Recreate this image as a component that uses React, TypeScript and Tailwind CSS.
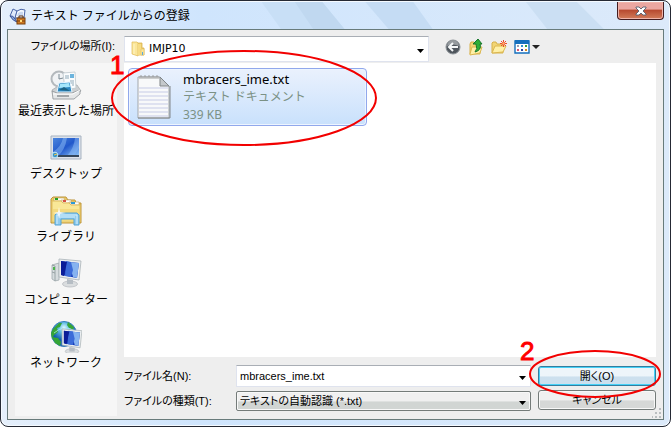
import type { ReactNode } from "react";

const jp = "font-['Noto_Sans','Noto_Sans_CJK_JP',sans-serif]";
const compact =
  "font-['Liberation_Sans','Noto_Sans_CJK_JP',sans-serif] [font-feature-settings:'palt']";

function AppIcon() {
  return (
    <svg viewBox="0 0 18 18" className="size-[18px]" aria-hidden="true">
      <path d="M1 9 4 2l4 2-2 8Z" fill="#dfe9fb" stroke="#4a65a8" />
      <path d="M8 4q4-3 8-1l-1 8H6Z" fill="#f4f8ff" stroke="#4a65a8" />
      <path d="M1 9q3-1 5 3l2 3q-4-1-7-6Z" fill="#8fabdf" stroke="#3b5398" />
      <path d="M9 6q3-2 5-1v4H8Z" fill="#c9d8f0" />
      <rect x="8" y="11" width="8" height="6" fill="#d07a22" stroke="#7b430f" />
      <path d="M10 11V9h4v2" fill="none" stroke="#5b3115" />
      <path d="M8 14h8" stroke="#7b430f" />
      <path d="M11 13h2v2h-2z" fill="#ffdc7a" />
    </svg>
  );
}

function FolderIcon() {
  return (
    <svg viewBox="0 0 16 16" className="size-4" aria-hidden="true">
      <path d="M7 2h5v5h2v7H7Z" fill="#f1cf6b" stroke="#d9b250" strokeWidth=".8" />
      <path d="M2 1h5l1 1v13l-6-2Z" fill="#fbe69a" stroke="#dfb958" strokeWidth=".7" />
      <path d="M8 3h3v11H8z" fill="#f7dc84" />
      <path d="M11 8h3v6h-3z" fill="#f9e69d" stroke="#dfb958" strokeWidth=".5" />
      <path d="M12 11h1v3h-1z" fill="#5aa9dc" />
      <path d="M4 3v10" stroke="#fff5c6" />
    </svg>
  );
}

function NotepadIcon() {
  return (
    <svg viewBox="0 0 34 46" className="h-[46px] w-[34px]" aria-hidden="true">
      <path d="M1 3h22l9 9v32H1Z" fill="#f8f9fa" stroke="#a3a7aa" />
      <path d="M1 44h32V12" fill="none" stroke="#818689" />
      <path d="M2 14h29M2 18h29M2 22h29M2 26h29M2 30h29M2 34h29M2 38h29M2 42h29" stroke="#c6cbe6" />
      <path d="M23 3v9h9Z" fill="#c4c8cb" stroke="#808588" />
      <path d="M3 5V2h2v3M7 5V2h2v3M11 5V2h2v3M15 5V2h2v3M19 5V2h2v3" fill="none" stroke="#999" strokeWidth=".9" />
    </svg>
  );
}

function RecentIcon() {
  return (
    <svg viewBox="0 0 32 32" className="size-8" aria-hidden="true">
      <path d="m2 21 8-5h17l4 6-5 3H3Z" fill="#cdd0d2" stroke="#a6abad" strokeWidth=".8" />
      <circle cx="9" cy="10" r="7.5" fill="#f1f3f5" stroke="#b4b9bd" strokeWidth="2" />
      <path d="M9 5v5l4-1" fill="none" stroke="#788892" />
      <path d="m13 4 12-1 1 16-11 2Z" fill="#fafcfd" stroke="#bcc6cc" strokeWidth=".8" />
      <path d="M15 7h4M15 9h4M20 12h4M20 14h4M22 16h2" stroke="#8fa9b9" />
      <path d="M20 5h4v4h-4z" fill="#6cb4dd" />
      <path d="m9 14 11-1 2 10H7Z" fill="#2c88c2" stroke="#e7f6ff" />
      <path d="m10 15 9-1 1 4-11 1Z" fill="#a4e6fb" />
      <path d="m9 21 5-3 6 4Z" fill="#1c6384" />
      <path d="m2 22 5 2h15l8-3v4l-6 5H3Z" fill="#e5e7e8" stroke="#8b9194" strokeWidth=".8" />
      <path d="M3 25h20l7-4" fill="none" stroke="#fff" />
      <path d="M7 26h12v2H7z" fill="#a1a6a9" />
    </svg>
  );
}

function DesktopIcon() {
  return (
    <svg viewBox="0 0 32 32" className="size-8" aria-hidden="true">
      <defs>
        <linearGradient id="desktop" x2="1" y2="1">
          <stop stopColor="#4b86dd" /><stop offset=".5" stopColor="#2158cb" /><stop offset="1" stopColor="#8ec5f7" />
        </linearGradient>
      </defs>
      <path d="M1 4h30v23H1Z" fill="#dde2ea" stroke="#a7b3c1" />
      <path d="M3 6h26v18H3Z" fill="url(#desktop)" />
      <path d="M3 20Q11 15 13 6h4Q15 18 8 24H3ZM17 24Q24 16 25 6h4v10l-5 8Z" fill="#8bbcf5" opacity=".5" />
      <path d="M3 23h26v2H3Z" fill="#34465b" />
      <circle cx="5" cy="23" r="2.8" fill="#3795c9" stroke="#c0e5f5" />
      <path d="m4 23 3-1" stroke="#f3c54b" />
    </svg>
  );
}

function LibraryIcon() {
  return (
    <svg viewBox="0 0 32 32" className="size-8" aria-hidden="true">
      <path d="M1 28V4l2-2h13l2 3h7l1 3h5v20Z" fill="#edca62" stroke="#bd953d" />
      <path d="M4 3h10l1 3H4zM11 5h10v3H11zM19 7h10v3H19z" fill="#fff" stroke="#c3a461" strokeWidth=".6" />
      <path d="M5 3h3v2H5z" fill="#28a124" /><path d="M13 5h3v2h-3z" fill="#d65042" /><path d="M21 7h4v2h-4z" fill="#2a99d7" />
      <path d="M2 6h9l2 2h6l2 2h9v17H2Z" fill="#f9e797" stroke="#dfbd60" />
      <path d="M3 14h26v12H3Z" fill="#f0d06b" opacity=".55" />
      <path d="M5 30V20l2-2h20l2 2v10h-5v-6H11v6Z" fill="#91cbed" stroke="#55a4d5" />
      <path d="M7 29v-9h20v9M9 22h16" fill="none" stroke="#d3f0ff" />
      <path d="m9 12 1 5 6 1-6 1-1 5-1-5-5-1 5-1Z" fill="white" opacity=".85" />
    </svg>
  );
}

function Monitor() {
  return (
    <>
      <ellipse cx="20" cy="26" rx="7.5" ry="3" fill="#dadddf" stroke="#b9bdc1" strokeWidth=".8" />
      <path d="m17 21 6 1v4h-6Z" fill="#b6bdc4" />
      <path d="m9 1 22 2-2 19-20-3Z" fill="#eceff0" stroke="#aab2b7" strokeWidth=".8" />
      <path d="m11 3 18 2-2 15-16-3Z" fill="#1236b4" />
      <path d="m19 4 10 1-2 15-4-1Z" fill="#86b3f0" />
      <path d="m16 3 5 1 2 8-2 7-6-1Z" fill="#3c6bd8" />
      <path d="m11 3 6 1-3 14-3-1Z" fill="#0b1c98" />
    </>
  );
}

function ComputerIcon() {
  return (
    <svg viewBox="0 0 32 32" className="size-8" aria-hidden="true">
      <path d="m2 7 7-2v17l-4 1-3-2Z" fill="#d6dcde" stroke="#a0a9ad" strokeWidth=".8" />
      <path d="m2 7 3 1v15M2 14l3 1" fill="none" stroke="#8c9799" strokeWidth=".8" />
      <path d="M3 9h2v3H3z" fill="#4cb64c" />
      <Monitor />
    </svg>
  );
}

function NetworkIcon() {
  return (
    <svg viewBox="0 0 32 32" className="size-8" aria-hidden="true">
      <defs>
        <radialGradient id="globe" cx=".5" cy=".25">
          <stop stopColor="#e3fbff" /><stop offset=".4" stopColor="#64bee3" /><stop offset="1" stopColor="#125db0" />
        </radialGradient>
      </defs>
      <circle cx="14" cy="13" r="12.5" fill="url(#globe)" stroke="#377dbe" />
      <path d="m3 8 6-6h3l-2 4-3 1 1 4-4 3-2 4-1-6Zm-1 8 6 1 3 4-1 4-5-3ZM18 1l6 5-1 3-4-2-2-3Z" fill="#35a536" />
      <path d="M4 12Q14 3 25 10" fill="none" stroke="#b8f1ff" opacity=".7" />
      <g transform="translate(4 7) scale(.9)"><Monitor /></g>
    </svg>
  );
}

function BackIcon() {
  return (
    <svg viewBox="0 0 16 16" className="size-4" aria-hidden="true">
      <circle cx="8" cy="8" r="7" fill="#4f565d" stroke="#8c9297" />
      <path d="M2 7a6 6 0 0 1 12 0Q8 4 2 7" fill="#969b9f" />
      <path d="M13 8H5m3-4L4 8l4 4" fill="none" stroke="#f4f6f7" strokeWidth="2" />
    </svg>
  );
}

function UpIcon() {
  return (
    <svg viewBox="0 0 16 18" className="h-[18px] w-4" aria-hidden="true">
      <path d="M2 16V6l1-2h3l1 2h5v10Z" fill="#f2d574" stroke="#d6b14b" />
      <path d="m2 16 2-7h10l-2 6-10 2Z" fill="#fff0a7" stroke="#dcb750" />
      <path d="M7 14q3-3 1-8H5l5-5 4 5h-2q2 6-5 8Z" fill="#2eae36" stroke="#16762a" />
    </svg>
  );
}

function NewFolderIcon() {
  return (
    <svg viewBox="0 0 16 16" className="size-4" aria-hidden="true">
      <path d="M1 14V4l1-1h3l1 2h6v9Z" fill="#f2d574" stroke="#d6b14b" />
      <path d="m1 14 3-7h11l-3 6Z" fill="#fff0a7" stroke="#dcb750" />
      <path d="M12.5 1v7M9 4.5h7m-6-2.5 5 5m0-5-5 5" stroke="#ed4b2b" />
      <circle cx="12.5" cy="4.5" r="1.3" fill="#ffb070" />
    </svg>
  );
}

function ViewIcon() {
  return (
    <svg viewBox="0 0 26 16" className="h-4 w-[26px]" aria-hidden="true">
      <path d="M1 2h14v12H1Z" fill="white" stroke="#146fbd" strokeWidth="1.4" />
      <path d="M1 1h14v4H1Z" fill="#146fbd" />
      <path d="M3 6h2v2H3z" fill="#96a0b5" /><path d="M7 6h2v2H7z" fill="#318fd1" /><path d="M11 6h2v2h-2z" fill="#31a33b" />
      <path d="M3 10h2v2H3z" fill="#df5570" /><path d="M7 10h2v2H7z" fill="#2745a4" /><path d="M11 10h2v2h-2z" fill="#d68822" />
      <path d="M18 6h8l-4 4Z" fill="#222" />
    </svg>
  );
}

function Arrow() {
  return (
    <svg viewBox="0 0 7 4" className="pointer-events-none absolute top-1/2 right-[5px] h-1 w-[7px]" aria-hidden="true">
      <path d="M0 0h7L3.5 4Z" fill="#000" />
    </svg>
  );
}

const places: { label: string; icon: ReactNode }[] = [
  { label: "最近表示した場所", icon: <RecentIcon /> },
  { label: "デスクトップ", icon: <DesktopIcon /> },
  { label: "ライブラリ", icon: <LibraryIcon /> },
  { label: "コンピューター", icon: <ComputerIcon /> },
  { label: "ネットワーク", icon: <NetworkIcon /> },
];

function TitleBar() {
  return (
    <header className="relative flex h-[27px] shrink-0 items-center pl-[2px]">
      <svg viewBox="0 0 671 28" preserveAspectRatio="xMinYMin slice" className="absolute inset-0 h-full w-full" aria-hidden="true">
        <path d="M260 0h62l23 28h-65Z" fill="#c8dff6" />
        <path d="M294 0h28l23 28h-32Z" fill="#c0d8f0" />
        <path d="M366 0h49l20 28h-45Z" fill="#c5dcf4" />
        <path d="M530 0h52l28 28h-58Z" fill="#cbdff3" />
      </svg>
      <div className="relative flex items-center gap-1">
        <AppIcon />
        <h1 className={`${jp} text-xs text-black`}>テキスト ファイルからの登録</h1>
      </div>
      <button aria-label="閉じる" className="absolute top-0 right-0 flex h-[18px] w-[47px] items-center justify-center rounded-b border border-t-0 border-[#431d20] bg-linear-to-b from-[#eba7a1] from-40% via-[#b84b31] via-50% to-[#d27c5a] shadow-[inset_0_0_0_1px_#efb4aa]">
        <svg viewBox="0 0 12 10" className="h-[10px] w-3" aria-hidden="true">
          <path d="M1 1h3l2 2 2-2h3v1L8 5l3 3v1H8L6 7 4 9H1V8l3-3-3-3Z" fill="white" stroke="#555d6e" strokeWidth=".9" />
        </svg>
      </button>
    </header>
  );
}

export default function App() {
  return (
    <main className="flex min-h-screen flex-col overflow-hidden rounded-lg border border-[#252934] bg-linear-to-r from-[#e5effb] via-[#cfe5fd] via-30% to-[#dceafa] px-[6px] pt-px pb-[6px] text-black shadow-[inset_0_0_0_1px_#f5faff]">
      <TitleBar />
      <div className="relative flex flex-1 flex-col border border-[#687b7b] bg-[#eeeeee] px-[7px]">
        <div className="flex h-[33px] shrink-0 items-center">
          <label htmlFor="folder" className={`${compact} w-[109px] shrink-0 pr-[9px] text-right text-[11px]`}>ファイルの場所(I):</label>
          <div className="relative mt-1 w-[305px] shrink-0">
            <span className="pointer-events-none absolute top-[5px] left-[6px]"><FolderIcon /></span>
            <select id="folder" className="block h-[26px] w-full appearance-none border border-[#dfe3ee] border-t-[#a9aeb5] bg-white pt-px pl-6 font-['DejaVu_Sans',sans-serif] text-[11px]">
              <option>IMJP10</option>
            </select>
            <Arrow />
          </div>
          <div className="flex items-center gap-[7px] pl-4">
            <button aria-label="戻る"><BackIcon /></button>
            <button aria-label="上のフォルダーへ"><UpIcon /></button>
            <button aria-label="新しいフォルダー"><NewFolderIcon /></button>
            <button aria-label="表示"><ViewIcon /></button>
          </div>
        </div>

        <div className="flex flex-1 gap-[7px]">
          <nav className="mb-[3px] flex w-[102px] shrink-0 flex-col bg-[#f6f6f6] pt-[6px]">
            {places.map((place) => (
              <button key={place.label} className={`${jp} flex h-[63px] flex-col items-center text-xs leading-5 whitespace-nowrap`}>
                {place.icon}
                <span>{place.label}</span>
              </button>
            ))}
          </nav>

          <div className="flex min-w-0 flex-1 flex-col">
            <section className="flex-1 bg-white px-1 pt-[5px]">
              <div className="relative w-[239px]">
                <button className="flex h-[58px] w-full items-center gap-3 rounded-sm border border-[#91a8ec] bg-linear-to-b from-[#eaf1fd] to-[#c9e1fc] pl-2 text-left shadow-[inset_0_0_0_1px_#edf5ff]">
                  <NotepadIcon />
                  <span className={`${jp} flex flex-col text-xs leading-[18px]`}>
                    <span className="text-[13px]">mbracers_ime.txt</span>
                    <span className="text-[#7b9185]">テキスト ドキュメント</span>
                    <span className="text-[#7b9185]">339 KB</span>
                  </span>
                </button>
                <svg viewBox="0 0 268 98" className="pointer-events-none absolute -top-5 -left-[17px] h-[98px] w-[268px]" aria-hidden="true">
                  <ellipse cx="133" cy="50" rx="132" ry="47" fill="none" stroke="#f20000" strokeWidth="2" />
                </svg>
                <span className="pointer-events-none absolute -top-[18px] -left-[18px] font-['Liberation_Sans',sans-serif] text-[26px] leading-[30px] text-[#ff0000] [-webkit-text-stroke:1px_#ff0000]">1</span>
              </div>
            </section>

            <div className="flex h-[62px] shrink-0 gap-[7px] pt-2">
              <div className={`${compact} grid flex-1 grid-cols-[112px_1fr] content-start gap-y-1 text-[11px]`}>
                <label htmlFor="filename" className="self-center">ファイル名(N):</label>
                <div className="relative">
                  <input id="filename" defaultValue="mbracers_ime.txt" className="block h-[22px] w-full border border-[#dfe3ee] border-t-[#a9aeb5] bg-white pl-[3px]" />
                  <Arrow />
                </div>
                <label htmlFor="filetype" className="self-center">ファイルの種類(T):</label>
                <div className="relative">
                  <select id="filetype" className="block h-5 w-full appearance-none rounded-xs border border-[#747b79] bg-linear-to-b from-[#f0f0f0] from-50% to-[#d1d5d3] to-55% pl-[3px] shadow-[inset_0_0_0_1px_#f8f8f8]">
                    <option>テキストの自動認識 (*.txt)</option>
                  </select>
                  <Arrow />
                </div>
              </div>
              <div className={`${compact} flex w-[118px] shrink-0 flex-col gap-1 pt-px text-[11px]`}>
                <div className="relative">
                  <button className="block h-5 w-full rounded-[3px] border border-[#347d9e] bg-linear-to-b from-[#edf5fa] from-50% to-[#cce0ee] to-55% leading-[18px] shadow-[inset_0_0_0_1px_#45d1f7]">開く(O)</button>
                  <svg viewBox="0 0 134 50" className="pointer-events-none absolute -top-[17px] -left-[10px] h-[50px] w-[134px] max-w-none" aria-hidden="true">
                    <ellipse cx="67" cy="25" rx="65" ry="23" fill="none" stroke="#f20000" strokeWidth="2" />
                  </svg>
                  <span className="pointer-events-none absolute -top-[30px] -left-[18px] font-['Liberation_Sans',sans-serif] text-[26px] leading-[30px] text-[#ff0000] [-webkit-text-stroke:1px_#ff0000]">2</span>
                </div>
                <button className="block h-5 w-full rounded-[3px] border border-[#747b79] bg-linear-to-b from-[#f0f0f0] from-50% to-[#d6d8d7] to-55% leading-[18px] shadow-[inset_0_0_0_1px_#f8f8f8]">キャンセル</button>
              </div>
            </div>
          </div>
        </div>
        <svg viewBox="0 0 10 10" className="absolute right-px bottom-px size-[10px]" aria-hidden="true">
          <path d="M7 0h2v2H7zM7 4h2v2H7zM3 4h2v2H3zM7 8h2v2H7zM3 8h2v2H3zM0 8h1v2H0z" fill="#babec0" />
        </svg>
      </div>
    </main>
  );
}
